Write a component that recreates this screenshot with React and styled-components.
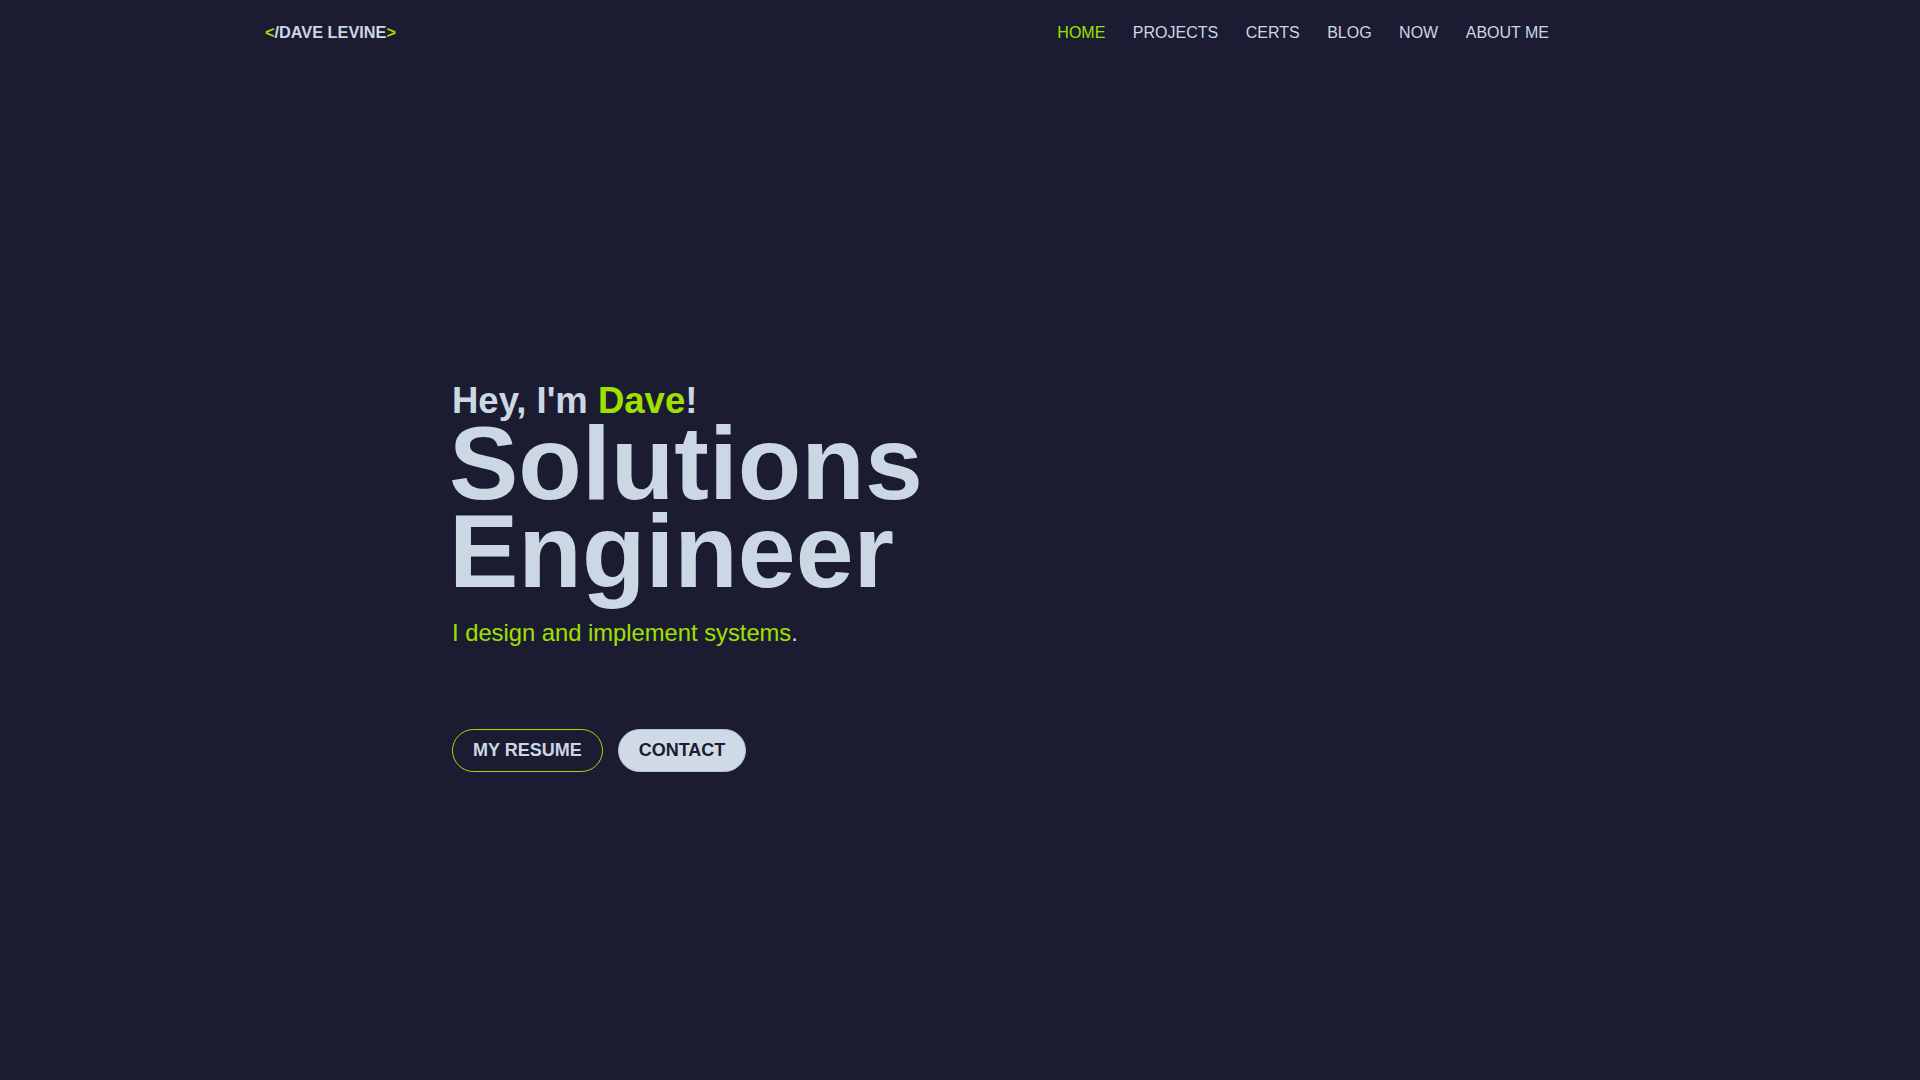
import React from "react"
import styled, { createGlobalStyle } from "styled-components"

const GlobalStyle = createGlobalStyle`
    html, body {
        margin: 0;
        padding: 0;
        background-color: #1b1c31;
    }
    body {
        font-family: "Liberation Sans", Arial, sans-serif;
        color: #ccd7e4;
        min-height: 100vh;
    }
`

const Page = styled.div`
    min-height: 100vh;
    background-color: #1b1c31;
`

const Header = styled.header`
    display: flex;
    align-items: center;
    justify-content: space-between;
    padding: 21px 371px 0 265px;
`

const Logo = styled.a`
    font-size: 16.3px;
    line-height: 20px;
    font-weight: 700;
    color: #ccd7e4;
    text-decoration: none;
`

const Bracket = styled.span`
    color: #a0e000;
`

const Nav = styled.nav`
    display: flex;
    gap: 27.5px;
    padding-top: 2px;
`

const NavLink = styled.a`
    font-size: 16px;
    line-height: 20px;
    color: ${props => props.active ? "#a0e000" : "#ccd7e4"};
    text-decoration: none;
    cursor: pointer;
`

const Hero = styled.section`
    display: flex;
    flex-direction: column;
    align-items: flex-start;
    padding: 340px 0 0 452px;
`

const Greeting = styled.p`
    margin: 0;
    font-size: 36.5px;
    line-height: 36px;
    font-weight: 700;
`

const Accent = styled.span`
    color: #a0e000;
`

const Title = styled.h1`
    margin: 0 0 0 -3px;
    font-size: 104px;
    line-height: 88px;
    font-weight: 700;
`

const Tagline = styled.p`
    margin: 22px 0 0;
    font-size: 23.75px;
    line-height: 32px;
    color: #a0e000;
`

const Dot = styled.span`
    color: #ccd7e4;
`

const Buttons = styled.div`
    display: flex;
    gap: 15px;
    margin-top: 80px;
`

const Button = styled.a`
    padding: 10px 20px;
    font-size: 18px;
    line-height: 21px;
    font-weight: 700;
    border-radius: 999px;
    text-decoration: none;
    cursor: pointer;
    border: 1px solid ${props => props.filled ? "#b8c4d2" : "#a0e000"};
    color: ${props => props.filled ? "#1b1c31" : "#ccd7e4"};
    background-color: ${props => props.filled ? "#cfdae6" : "transparent"};
`

const links = ["HOME", "PROJECTS", "CERTS", "BLOG", "NOW", "ABOUT ME"]

const App = () => {
    return (
        <Page>
            <GlobalStyle />
            <Header>
                <Logo>
                    <Bracket>&lt;</Bracket>/DAVE LEVINE<Bracket>&gt;</Bracket>
                </Logo>
                <Nav>
                    {links.map((l, i) => (
                        <NavLink key={l} active={i === 0}>{l}</NavLink>
                    ))}
                </Nav>
            </Header>
            <Hero>
                <Greeting>Hey, I'm <Accent>Dave</Accent>!</Greeting>
                <Title>Solutions<br />Engineer</Title>
                <Tagline>I design and implement systems<Dot>.</Dot></Tagline>
                <Buttons>
                    <Button>MY RESUME</Button>
                    <Button filled>CONTACT</Button>
                </Buttons>
            </Hero>
        </Page>
    )
}

export default App
